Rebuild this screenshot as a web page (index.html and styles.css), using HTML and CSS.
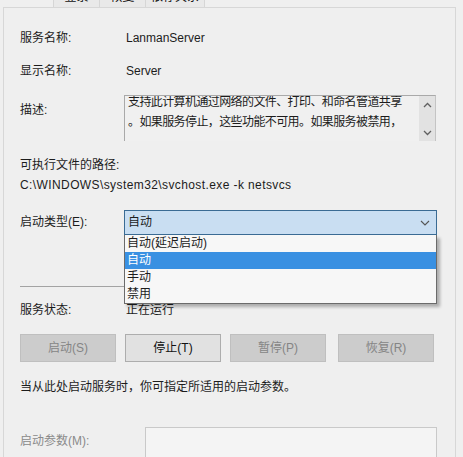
FILE: index.html
```html
<!DOCTYPE html>
<html lang="zh-CN">
<head>
<meta charset="utf-8">
<title>Server 的属性</title>
<link rel="stylesheet" href="styles.css">
</head>
<body>
<div class="tabs">
  <div class="tab">登录</div>
  <div class="tab">恢复</div>
  <div class="tab tab-wide">依存关系</div>
</div>
<div class="panel">
  <div class="row r1"><span class="label">服务名称:</span><span class="value">LanmanServer</span></div>
  <div class="row r2"><span class="label">显示名称:</span><span class="value">Server</span></div>
  <div class="row desc-row">
    <span class="label desc-label">描述:</span>
    <div class="desc-box">
      <div class="desc-text">支持此计算机通过网络的文件、打印、和命名管道共享<br>。如果服务停止，这些功能不可用。如果服务被禁用，</div>
      <div class="vscroll">
        <svg width="9" height="6" viewBox="0 0 9 6"><path d="M1 5 L4.5 1.5 L8 5" fill="none" stroke="#606060" stroke-width="1.3"/></svg>
        <svg width="9" height="6" viewBox="0 0 9 6"><path d="M1 1 L4.5 4.5 L8 1" fill="none" stroke="#606060" stroke-width="1.3"/></svg>
      </div>
    </div>
  </div>
  <div class="row path-label">可执行文件的路径:</div>
  <div class="row path">C:\WINDOWS\system32\svchost.exe -k netsvcs</div>
  <div class="row combo-row">
    <span class="label">启动类型(E):</span>
    <div class="combo-wrap">
      <div class="combo">
        <span>自动</span>
        <svg width="10" height="6" viewBox="0 0 10 6"><path d="M1 1 L5 5 L9 1" fill="none" stroke="#555" stroke-width="1.1"/></svg>
      </div>
      <ul class="dropdown">
        <li>自动(延迟启动)</li>
        <li class="selected">自动</li>
        <li>手动</li>
        <li>禁用</li>
      </ul>
    </div>
  </div>
  <div class="separator"></div>
  <div class="row status-row"><span class="label">服务状态:</span><span class="value">正在运行</span></div>
  <div class="buttons">
    <div class="btn disabled">启动(S)</div>
    <div class="btn">停止(T)</div>
    <div class="btn disabled">暂停(P)</div>
    <div class="btn disabled">恢复(R)</div>
  </div>
  <div class="row note">当从此处启动服务时，你可指定所适用的启动参数。</div>
  <div class="row params-row">
    <span class="label params-label">启动参数(M):</span>
    <div class="params-input"></div>
  </div>
</div>
</body>
</html>
```
FILE: styles.css
```css
html, body {
  margin: 0;
  padding: 0;
  overflow: hidden;
}
body {
  width: 463px;
  height: 457px;
  background: #efefef;
  color: #1c1c1c;
  font-family: "Liberation Sans", "Noto Sans CJK SC", sans-serif;
  font-size: 12px;
}
.tabs {
  display: flex;
  margin-left: 53px;
  margin-top: -13px;
  height: 20px;
}
.tab {
  width: 46px;
  height: 20px;
  line-height: 20px;
  text-align: center;
  background: #e9e9e9;
  border-left: 1px solid #d6d6d6;
  box-sizing: border-box;
  color: #111;
}
.tab-wide {
  width: 60px;
  border-right: 1px solid #d6d6d6;
}
.panel {
  margin-left: 3px;
  width: 453px;
  height: 470px;
  box-sizing: border-box;
  border: 1px solid #d7d7d7;
  border-bottom: none;
  padding-left: 16px;
  padding-top: 20px;
  background: #efefef;
}
.row {
  display: flex;
  line-height: 20px;
  height: 20px;
}
.label {
  width: 104px;
  flex: none;
}
.value {
  padding-left: 2px;
}
.r2 { margin-top: 13px; }
.desc-row {
  margin-top: 14px;
  height: 46px;
}
.desc-label {
  padding-top: 5px;
}
.desc-box {
  width: 312px;
  height: 46px;
  box-sizing: border-box;
  border: 1px solid #a9a9a9;
  border-right-color: #c4c4c4;
  border-bottom: none;
  display: flex;
  overflow: hidden;
  background: #f0f0f0;
}
.desc-text {
  flex: 1;
  min-width: 0;
  padding-left: 3px;
  margin-top: -4px;
  line-height: 20px;
  letter-spacing: -0.6px;
  white-space: nowrap;
  overflow: hidden;
}
.vscroll {
  width: 16px;
  flex: none;
  background: #e2e2e2;
  display: flex;
  flex-direction: column;
  justify-content: space-between;
  align-items: center;
  padding: 6px 0 5px;
  box-sizing: border-box;
}
.path-label { margin-top: 14px; }
.path { letter-spacing: 0.4px; }
.combo-row {
  margin-top: 15px;
  height: 25px;
  line-height: 25px;
}
.combo-wrap {
  position: relative;
  width: 313px;
}
.combo {
  height: 25px;
  box-sizing: border-box;
  border: 1px solid #3a6b94;
  background: #c9def2;
  display: flex;
  align-items: center;
  justify-content: space-between;
  padding: 0 6px 0 3px;
  line-height: 23px;
}
.dropdown {
  position: absolute;
  top: 25px;
  left: 0;
  width: 313px;
  box-sizing: border-box;
  margin: 0;
  padding: 0;
  list-style: none;
  background: #f7f7f7;
  border: 1px solid #6b6b6b;
  border-top: none;
  box-shadow: 3px 3px 3px rgba(0, 0, 0, 0.28);
  z-index: 2;
}
.dropdown li {
  height: 17px;
  line-height: 17px;
  padding-left: 2px;
}
.dropdown li.selected {
  background: #3990e2;
  color: #fff;
}
.separator {
  margin-top: 51px;
  width: 417px;
  height: 1px;
  background: #a3a3a3;
}
.status-row { margin-top: 13px; }
.buttons {
  margin-top: 14px;
  width: 416px;
  display: flex;
  gap: 9px;
}
.btn {
  width: 96px;
  height: 28px;
  box-sizing: border-box;
  border: 1px solid #adadad;
  background: #e1e1e1;
  text-align: center;
  line-height: 26px;
  color: #111;
}
.btn.disabled {
  background: #cccccc;
  border-color: #bfbfbf;
  color: #858585;
}
.btn:last-child {
  margin-left: 3px;
}
.note { margin-top: 15px; }
.params-row {
  margin-top: 30px;
  height: 34px;
}
.params-label {
  width: 125px;
  color: #8a8a8a;
  line-height: 28px;
}
.params-input {
  width: 292px;
  height: 34px;
  box-sizing: border-box;
  border: 1px solid #c9c9c9;
  background: #f4f4f4;
}
```
